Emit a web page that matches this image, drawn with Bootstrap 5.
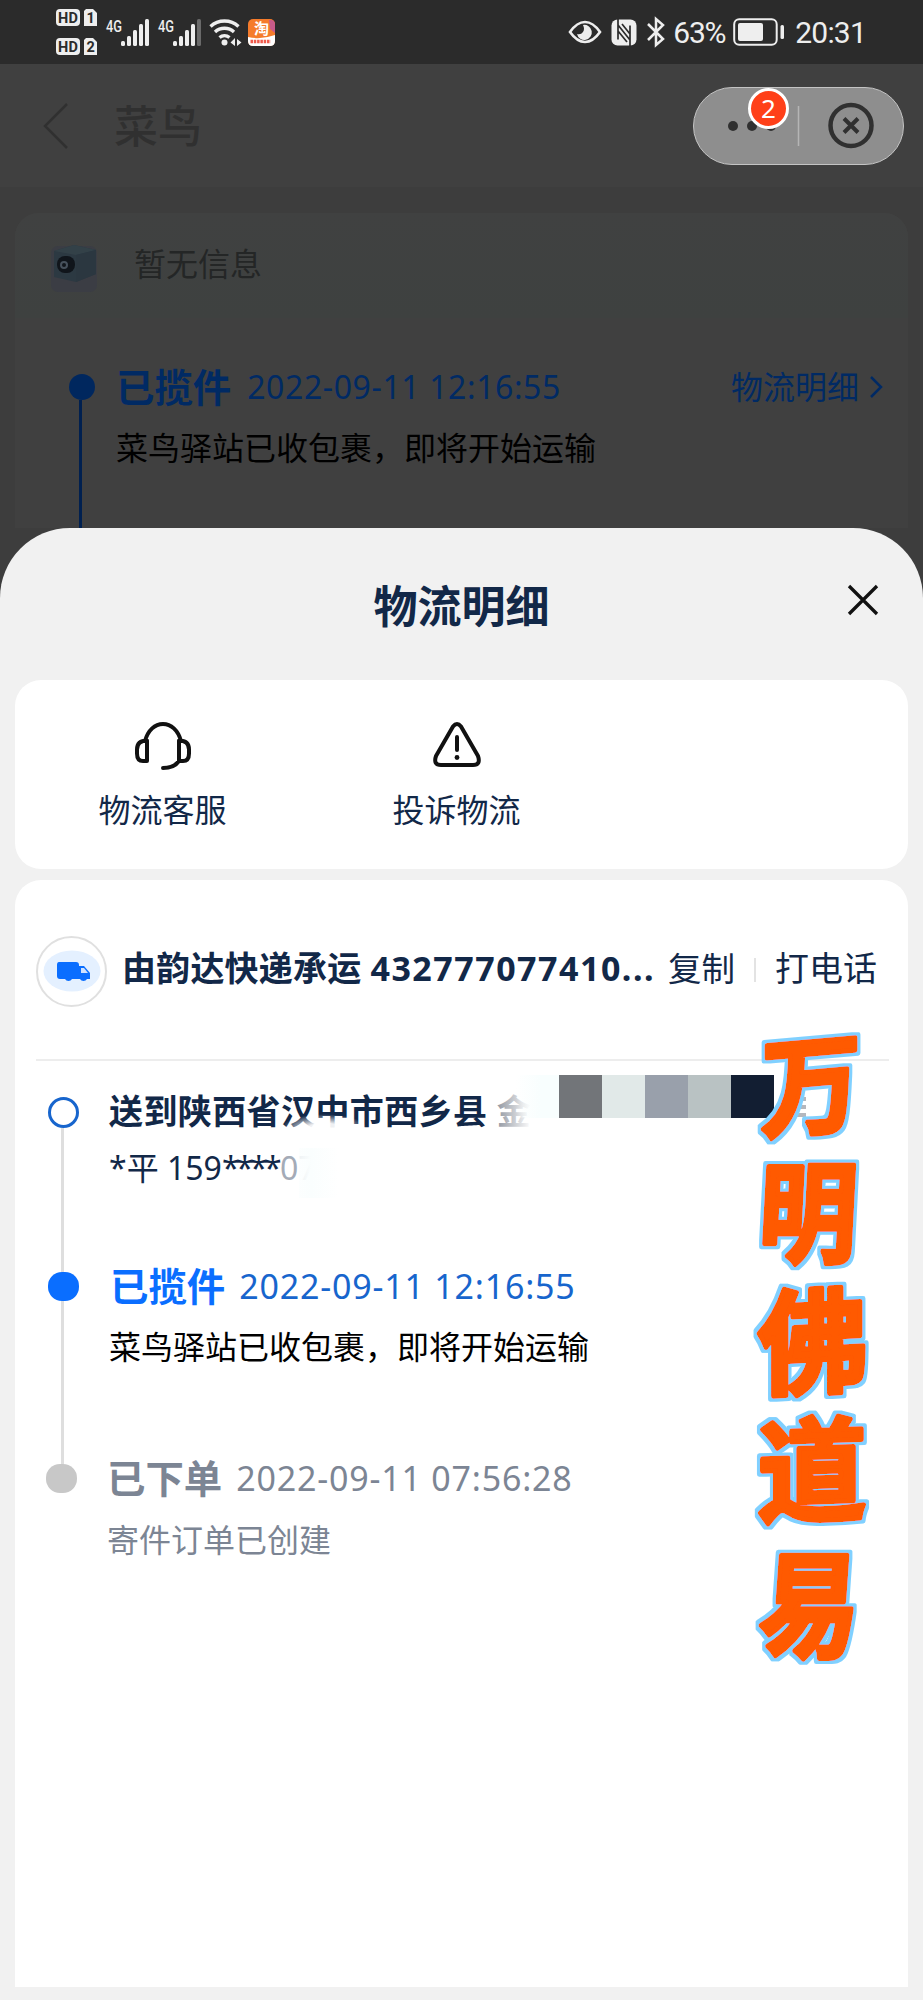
<!DOCTYPE html>
<html lang="zh-CN">
<head>
<meta charset="utf-8">
<meta name="viewport" content="width=device-width, initial-scale=1">
<title>物流明细</title>
<link href="https://cdn.jsdelivr.net/npm/bootstrap@5.3.0/dist/css/bootstrap.min.css" rel="stylesheet">
<style>
body{background:#3d3d3d;font-family:"Noto Sans","Noto Sans CJK SC",sans-serif;font-size:32px;line-height:48px;color:#000;height:2000px;overflow:hidden}
svg{display:block;flex:none;overflow:visible}
span,h1,h2,p,a{white-space:nowrap}
.status{height:64px;background:#2b2b2b;color:#eee;padding-left:56px;padding-right:57px}
.status .num{font-family:Roboto,sans-serif;font-size:30px;line-height:62px;padding-top:2px}
.topbar{height:123px;background:#404040;padding:0 19px 0 43px}
.topbar h1{font-size:44px;line-height:60px;margin:0 0 0 45px;color:#303030;font-weight:500}
.capsule{width:211px;height:78px;border-radius:39px;background:#8e8e8e;border:1px solid #c4c4c4}
.bubble{left:54px;top:0;width:41px;height:41px;border-radius:50%;border:3px solid #fff;background:#ff4019;color:#fff;font-size:26px;line-height:35px;text-align:center}
.dimcard{margin:26px 15px 0;background:#404040;border-radius:24px 24px 0 0;height:315px}
.notice{height:105px;background:linear-gradient(#404141,#3e4140);border-radius:24px 24px 0 0;padding-left:31px;color:#242626}
.rail{width:3px}
.bluebold{font-size:38.400px;font-weight:700;line-height:50px}
.sheet{height:1472px;background:#f1f1f1;border-radius:70px 70px 0 0;padding:0 15px}
.sheet-head{height:152px}
.sheet-head h2{font-size:44px;font-weight:700;line-height:60px;color:#122848;margin:0}
.sheet-close{right:28px;top:55px}
.panel{background:#fff;border-radius:26px}
.tools{height:189px;padding-top:39px;color:#122848}
.tool{width:295px}
.detail{margin-top:11px;height:1107px;border-radius:26px 26px 0 0;color:#122848}
.carrier{height:181px;margin:0 19px 0 21px;border-bottom:2px solid #ededed}
.carrier>span{margin-top:-4px}
.strong34{font-size:34px;font-weight:700}
.truck{width:71px;height:71px;border:2px solid #e0e0e0;border-radius:50%;margin-top:3px}
.vr-thin{width:2px;height:24px;background:#e3e3e3}
.step{display:flex}
.axis{flex:none;margin-left:33px}
.dot{width:31px;height:29px;border-radius:14px;background:#0a6eff}
.dot.open{height:31px;border-radius:50%;background:#fff;border:3px solid #1765cd}
.dot.done{background:#c8c8c8;margin-left:-2px}
.stem{width:3px;background:#dedede;margin-left:13px}
.date{font-size:34px;letter-spacing:.8px}
.mosaic{left:501px;top:195px;height:43px}
.mosaic i{width:43px;height:43px}
.fade-a{left:478px;top:205px;width:64px;height:56px;background:linear-gradient(90deg,#fff3,#fff 60%)}
.fade-b{left:266px;top:234px;width:86px;height:28px;background:radial-gradient(ellipse,#fffe 25%,#fff0 70%)}
.fade-c{left:284px;top:268px;width:40px;height:50px;background:linear-gradient(90deg,#fafefe99,#fafefe 30%,#fff)}
.ghost{left:780px;top:217px;width:11px;height:22px;background:repeating-linear-gradient(#b4b7bd 0 4px,#fff 4px 8px)}
.brush{left:729px;top:140px}
</style>
</head>
<body>
<div class="status d-flex align-items-center justify-content-between">
  <div class="d-flex align-items-center">
    <svg width="42" height="50" viewBox="0 0 42 50" fill="#eee"><rect y="2" width="24" height="17" rx="4"/><path d="M30 2h7l4 4v13H28V4z"/><rect y="31" width="24" height="17" rx="4"/><path d="M30 31h7l4 4v13H28V33z"/><g fill="#2b2b2b" font-family="Roboto" font-weight="700" font-size="14.5"><text x="2" y="16" textLength="20">HD</text><text x="30.5" y="16">1</text><text x="2" y="45" textLength="20">HD</text><text x="30.5" y="45">2</text></g></svg>
    <svg class="ms-2" width="44" height="32" viewBox="0 0 44 32" fill="#eee"><text x="0" y="16" font-family="Roboto" font-size="16" font-weight="500" textLength="16" lengthAdjust="spacingAndGlyphs">4G</text><rect x="15" y="25" width="4" height="5" rx="1.5"/><rect x="21" y="20" width="4" height="10" rx="1.5"/><rect x="27" y="14" width="4" height="16" rx="1.5"/><rect x="33" y="8" width="4" height="22" rx="1.5"/><rect x="39" y="3" width="4" height="27" rx="1.5"/></svg>
    <svg style="margin-left:8px" width="44" height="32" viewBox="0 0 44 32" fill="#eee"><text x="0" y="16" font-family="Roboto" font-size="16" font-weight="500" textLength="16" lengthAdjust="spacingAndGlyphs">4G</text><rect x="15" y="25" width="4" height="5" rx="1.5"/><rect x="21" y="20" width="4" height="10" rx="1.5"/><rect x="27" y="14" width="4" height="16" rx="1.5"/><rect x="33" y="8" width="4" height="22" rx="1.5"/><rect x="39" y="3" width="4" height="27" rx="1.5" fill="#6a6a6a"/></svg>
    <svg style="margin-left:7px" width="33" height="30" viewBox="0 0 33 30" fill="none" stroke="#eee" stroke-width="3.4"><path d="M1.5 9.5a20.500 20.500 0 0 1 28 0M6 15a14 14 0 0 1 19 0M10.500 20.500a8 8 0 0 1 10 0"/><circle cx="15.500" cy="25.500" r="3" fill="#eee" stroke="none"/><path d="M26 21v8l-4.500-3.500zM28 22l4.500 3.500-4.500 3.500z" fill="#eee" stroke="none"/></svg>
    <svg style="margin-left:6px" width="27" height="27" viewBox="0 0 27 27"><rect width="27" height="27" rx="5" fill="#f57b2b"/><path d="M21 1h2q4 0 4 5v8l-5-4z" fill="#c75a8a"/><path d="M0 18q13 3 27-2v6q0 5-5 5H5q-5 0-5-5z" fill="#fff"/><text x="6" y="15" font-size="15" font-weight="700" fill="#fff" font-family="Noto Sans CJK SC">淘</text><path d="M2.500 22.500h20" stroke="#ef5b4c" stroke-width="3.500" stroke-dasharray="2.500 .8"/></svg>
  </div>
  <div class="d-flex align-items-center">
    <svg width="34" height="26" viewBox="0 0 34 26"><path d="M2 13Q9 3 17 3t15 10Q25 23 17 23T2 13z" fill="none" stroke="#eee" stroke-width="2.600"/><path d="M15 6a7.500 7.500 0 1 1-6 9q4 1 6-2t0-7z" fill="#eee"/></svg>
    <svg style="margin-left:9px" width="26" height="27" viewBox="0 0 26 27"><rect x=".5" y=".5" width="25" height="26" rx="6" fill="#eee"/><path d="M7 0v20.500M19 27V6.500M7 6l12 15M11 5l8 10M7 12l9 11" stroke="#2b2b2b" stroke-width="1.700" fill="none"/></svg>
    <svg style="margin-left:9px" width="20" height="30" viewBox="0 0 20 30" fill="none" stroke="#eee" stroke-width="2.500"><path d="M2 7l15 15-7 6V2l7 6L2 23"/></svg>
    <span class="num" style="margin-left:7px;letter-spacing:-1.2px;width:54px">63%</span>
    <svg style="margin-left:6px" width="52" height="28" viewBox="0 0 52 28"><rect x="1.200" y="1.200" width="42.500" height="25.500" rx="5" fill="none" stroke="#eee" stroke-width="2"/><rect x="5" y="5" width="25" height="18" rx="2" fill="#eee"/><rect x="47.500" y="7" width="3.500" height="14" rx="1.500" fill="#eee"/></svg>
    <span class="num" style="margin-left:10px;letter-spacing:-.8px">20:31</span>
  </div>
</div>

<div class="topbar d-flex align-items-center">
  <svg width="26" height="46" viewBox="0 0 26 46" fill="none" stroke="#303030" stroke-width="2.500"><path d="M24 1L2 23l22 22"/></svg>
  <h1>菜鸟</h1>
  <div class="capsule position-relative ms-auto">
    <svg width="209" height="76" viewBox="0 0 209 76"><g fill="#303030"><circle cx="39" cy="38" r="5"/><circle cx="58" cy="38" r="5"/><circle cx="77" cy="38" r="5"/></g><path d="M104.500 18v40" stroke="#b5b5b5" stroke-width="1.500"/><g fill="none" stroke="#303030" stroke-width="4.500"><circle cx="157" cy="37.500" r="20.500"/><path d="M150 30.500l14 14M164 30.500l-14 14" stroke-width="4"/></g></svg>
    <span class="bubble position-absolute">2</span>
  </div>
</div>

<div class="dimcard">
  <div class="notice d-flex align-items-center">
    <svg width="56" height="56" viewBox="0 0 56 56"><rect x="5" y="8" width="46" height="46" rx="7" fill="#3b3d44"/><path d="M8 13l20-6 22 5v24l-20 8-22-5z" fill="#2c3942"/><path d="M8 13l20-6 22 5-20 5z" fill="#334148"/><path d="M30 17v27l20-8V12z" fill="#2b3740"/><rect x="11" y="18" width="18" height="17" rx="8" fill="#10151b"/><circle cx="18" cy="27" r="3" fill="none" stroke="#46515c" stroke-width="2"/></svg>
    <span style="margin-left:32px;padding-bottom:4px">暂无信息</span>
  </div>
  <div class="d-flex" style="padding-left:54px">
    <div style="width:26px;margin-top:56px" class="flex-shrink-0"><div class="rounded-circle" style="width:26px;height:26px;background:#00275e"></div><div class="rail" style="height:128px;background:#002050;margin-left:10px"></div></div>
    <div class="flex-grow-1" style="padding:44px 25px 0 21px">
      <div class="d-flex align-items-center" style="color:#002a64"><span class="bluebold">已揽件</span><span style="margin-left:16px;letter-spacing:.6px">2022-09-11 12:16:55</span><span class="ms-auto">物流明细</span><svg style="margin-left:10px" width="14" height="24" viewBox="0 0 14 24" fill="none" stroke="#002a64" stroke-width="2.500"><path d="M2 2l10 10L2 22"/></svg></div>
      <p class="m-0" style="margin-top:12px!important">菜鸟驿站已收包裹，即将开始运输</p>
    </div>
  </div>
</div>

<main class="sheet position-relative">
  <div class="sheet-head position-relative d-flex justify-content-center">
    <h2 style="margin-top:48px">物流明细</h2>
    <svg class="position-absolute sheet-close" width="34" height="34" viewBox="0 0 34 34" fill="none" stroke="#111" stroke-width="3.300"><path d="M3 3l28 28M31 3L3 31"/></svg>
  </div>
  <section class="panel tools d-flex">
    <div class="tool d-flex flex-column align-items-center">
      <svg width="60" height="52" viewBox="0 0 60 52" fill="none" stroke="#111" stroke-width="4" stroke-linecap="round" stroke-linejoin="round"><path d="M12 22C15 11 22 5 30 5s15 6 18 17M14 21.500q-10 0-10 9v4q0 7.500 6 7.500h4zM46 21.500q10 0 10 9v4q0 7.500-6 7.500h-4zM46 42q-5 7-16 7"/></svg>
      <span style="margin-top:15px">物流客服</span>
    </div>
    <div class="tool d-flex flex-column align-items-center" style="margin-left:-1px">
      <svg width="56" height="52" viewBox="0 0 56 52" fill="none" stroke="#111" stroke-width="4" stroke-linecap="round" stroke-linejoin="round"><path d="M24 7.500q4-5 8 0l17 29.500q3 9-5 9H12q-8 0-5-9zM28 18v13"/><circle cx="28" cy="38.500" r="2.400" fill="#111" stroke="none"/></svg>
      <span style="margin-top:15px">投诉物流</span>
    </div>
  </section>
  <section class="panel detail position-relative">
    <div class="carrier d-flex align-items-center">
      <div class="truck flex-shrink-0 d-flex align-items-center justify-content-center"><svg width="58" height="42" viewBox="0 0 58 42"><ellipse cx="29" cy="21" rx="28.500" ry="20.500" fill="#e4f0ff"/><path d="M16 12h17q3 0 3 3v1h5l6 7v6h-3a4 4 0 0 1-7 0h-8a4 4 0 0 1-7 0h-5q-3 0-3-3V15q0-3 2-3z" fill="#0a6eff"/><path d="M38 18h3l4 5h-7z" fill="#cfe2ff"/></svg></div>
      <span class="strong34" style="margin-left:15px;letter-spacing:.2px">由韵达快递承运 <span style="letter-spacing:1.5px">432777077410...</span></span>
      <span style="margin-left:auto;font-size:33.500px">复制</span><i class="vr-thin" style="margin:0 19px"></i><span style="font-size:34px;margin-right:12px">打电话</span>
    </div>
    <div class="step" style="height:191px">
      <div class="axis" style="padding-top:36px;width:61px"><div class="dot open"></div><div class="stem" style="height:124px"></div></div>
      <div style="padding-top:26px"><div class="strong34" style="letter-spacing:.4px">送到陕西省汉中市西乡县 <span style="color:#68707e">金</span></div><p class="m-0" style="padding-top:9px">*平 159<span style="letter-spacing:-3.600px">****</span><span style="margin-left:2px;color:#a4abb7">0</span><span style="color:#dde1e6">7</span></p></div>
    </div>
    <div class="step" style="height:192px">
      <div class="axis" style="padding-top:20px;width:62px"><div class="stem" style="height:20px;margin-top:-20px"></div><div class="dot"></div><div class="stem" style="height:143px"></div></div>
      <div style="padding-top:9px"><div class="d-flex align-items-center" style="color:#1765cd"><span class="bluebold" style="color:#0a6eff">已揽件</span><span class="date" style="margin-left:14px">2022-09-11 12:16:55</span></div><p class="m-0" style="margin:12px 0 0 -1px!important;color:#000">菜鸟驿站已收包裹，即将开始运输</p></div>
    </div>
    <div class="step" style="color:#7c8594">
      <div class="axis" style="padding-top:20px;width:59px"><div class="stem" style="height:20px;margin-top:-20px"></div><div class="dot done"></div></div>
      <div style="padding-top:9px"><div class="d-flex align-items-center"><span class="bluebold">已下单</span><span class="date" style="margin-left:14px">2022-09-11 07:56:28</span></div><p class="m-0" style="margin-top:13px!important">寄件订单已创建</p></div>
    </div>
    <div class="position-absolute fade-a"></div><div class="position-absolute fade-b"></div><div class="position-absolute fade-c"></div>
    <div class="position-absolute mosaic d-flex"><i style="background:linear-gradient(90deg,#f8fefe00,#f8fefe 60%)"></i><i style="background:#727579"></i><i style="background:#e1e9e8"></i><i style="background:#99a0ab"></i><i style="background:#b9c2c3"></i><i style="background:#121e32"></i></div>
    <div class="position-absolute ghost"></div>
    <svg class="position-absolute brush" width="140" height="660" viewBox="0 0 140 660">
      <defs><filter id="halo" x="-10%" y="-5%" width="120%" height="110%"><feMorphology in="SourceAlpha" operator="dilate" radius="2.5" result="d"/><feFlood flood-color="#80d0ff"/><feComposite in2="d" operator="in"/><feMerge><feMergeNode/><feMergeNode in="SourceGraphic"/></feMerge></filter></defs>
      <g filter="url(#halo)" fill="#ff5a00" stroke="#ff5a00" stroke-width="4.500" stroke-linejoin="round" stroke-linecap="round" font-family="Noto Sans CJK SC" font-weight="700" font-size="100" text-anchor="middle">
        <text transform="translate(67 106) skewY(-5) scale(1 1.080)">万</text>
        <text transform="translate(62 234) skewX(-3) scale(.98 1.1)">明</text>
        <text transform="translate(69 364) skewY(-3) scale(1.1 1.140)">佛</text>
        <text transform="translate(68 492) skewY(-2) scale(1.090 1.120)">道</text>
        <text transform="translate(63 628) skewX(-4) scale(1 1.150)">易</text>
      </g>
    </svg>
  </section>
</main>
<script src="https://cdn.jsdelivr.net/npm/bootstrap@5.3.0/dist/js/bootstrap.bundle.min.js"></script>
</body>
</html>
